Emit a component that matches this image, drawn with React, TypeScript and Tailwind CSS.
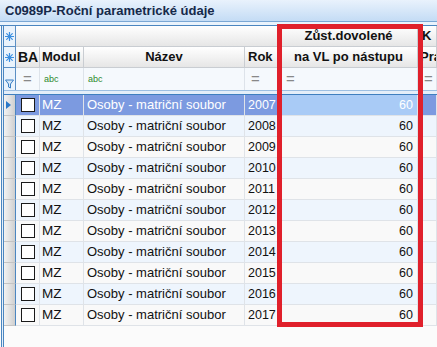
import React from "react";

const years = [2007, 2008, 2009, 2010, 2011, 2012, 2013, 2014, 2015, 2016, 2017];

const cols = "grid-cols-[12px_24px_44px_161px_35px_138px_1fr]";

function Star() {
  return (
    <svg width="9" height="9" viewBox="0 0 9 9" className="block">
      <g stroke="#3a8ee0" strokeWidth="1.2" strokeLinecap="round">
        <line x1="4.5" y1="0.5" x2="4.5" y2="8.5" />
        <line x1="0.5" y1="4.5" x2="8.5" y2="4.5" />
        <line x1="1.7" y1="1.7" x2="7.3" y2="7.3" />
        <line x1="7.3" y1="1.7" x2="1.7" y2="7.3" />
      </g>
    </svg>
  );
}

function Funnel() {
  return (
    <svg width="9" height="10" viewBox="0 0 9 10" className="block">
      <path d="M0.5 1 H8.5 L5.5 5 V9 L3.5 8 V5 Z" fill="#d6e8f8" stroke="#3a7fc4" strokeWidth="1" />
    </svg>
  );
}

const ind =
  "border-r border-[#5b8fc4] bg-gradient-to-r from-[#f4f4f4] to-[#d6d6d6] flex items-center justify-center";
const hdr =
  "border-r border-b border-[#c9cdd2] bg-gradient-to-b from-[#ffffff] to-[#e6e6e6] flex items-center overflow-hidden whitespace-nowrap font-bold text-[13px]";

export default function App() {
  return (
    <div className="w-[437px] h-[347px] overflow-hidden bg-[#fbfbfb] relative text-[#111] font-['Liberation_Sans',Arial,sans-serif]">
      <div className="h-[22px] bg-gradient-to-b from-[#e9f2fc] to-[#c4dcf5] border-b border-[#7aa7d4] flex items-center pl-[5px]">
        <span className="text-[13px] font-bold text-[#15294a]">C0989P-Roční parametrické údaje</span>
      </div>
      <div className="h-[4px] bg-[#eaf3fc] border-b border-[#4b86c0]" />
      <div className="flex h-[321px]">
        <div className="w-[1px] bg-[#4b86c0] ml-[1px]" />
        <div className="w-[1px] bg-[#e6f0fa]" />
        <div className="w-[1px] bg-[#4b86c0]" />
        <div className="flex-1 flex flex-col">
          {/* group header */}
          <div className={`grid ${cols} h-[21px]`}>
            <div className={`${ind} border-b border-b-[#5b8fc4] bg-none bg-[#eaf3fc]`}>
              <Star />
            </div>
            <div className={`${hdr} col-span-4`} />
            <div className={`${hdr} justify-center`}>Zůst.dovolené</div>
            <div className={`${hdr} pl-[4px]`}>K</div>
          </div>
          {/* header */}
          <div className={`grid ${cols} h-[21px]`}>
            <div className={`${ind} border-b border-b-[#5b8fc4] bg-none bg-[#eaf3fc]`}>
              <Star />
            </div>
            <div className={`${hdr} pl-[2px] text-[14px]`}>BA</div>
            <div className={`${hdr} pl-[2px]`}>Modul</div>
            <div className={`${hdr} justify-center`}>Název</div>
            <div className={`${hdr} pl-[3px]`}>Rok</div>
            <div className={`${hdr} justify-center`}>na VL po nástupu</div>
            <div className={`${hdr} pl-[2px]`}>Pra</div>
          </div>
          {/* filter */}
          <div className={`grid ${cols} h-[22px] bg-[#f5f9fd]`}>
            <div className={`${ind} bg-none bg-[#eaf3fc] items-end pb-[2px]`}>
              <Funnel />
            </div>
            {["=", "abc", "abc", "=", "=", "="].map((t, i) => (
              <div
                key={i}
                className={`border-r border-[#dde3ea] flex items-center ${
                  t === "abc" ? "pl-[4px] text-[9px] text-[#2d8a2d]" : "pl-[6px] text-[15px] text-[#888]"
                } ${i === 0 ? "pl-[7px]" : ""}`}
              >
                {t}
              </div>
            ))}
          </div>
          <div className="h-[5px] bg-[#e4eef9] border-t border-b border-t-[#9dbfe2] border-b-[#3f7fbf]" />
          {/* rows */}
          {years.map((y, idx) => {
            const sel = idx === 0;
            const bg = sel ? "bg-[#7c9ae0]" : idx % 2 === 1 ? "bg-[#eef5fd]" : "bg-[#f9f9f9]";
            const txt = sel ? "text-white" : "text-[#111]";
            const cell = `border-r border-b border-[#dfe3e8] flex items-center overflow-hidden whitespace-nowrap ${txt}`;
            return (
              <div key={y} className={`grid ${cols} h-[21px] ${bg}`}>
                <div className="border-r border-b border-r-[#4b86c0] border-b-[#c4c4c4] bg-gradient-to-r from-[#f2f2f2] via-[#e2e2e2] to-[#cfcfcf] flex items-center pl-[2px]">
                  {sel && (
                    <svg width="5" height="8" viewBox="0 0 5 8">
                      <path d="M0 0 L5 4 L0 8 Z" fill="#2a78c8" />
                    </svg>
                  )}
                </div>
                <div className={`${cell} pl-[5px]`}>
                  <div className="w-[14px] h-[14px] border border-[#1a1a1a] bg-white" />
                </div>
                <div className={`${cell} pl-[2px] text-[13.5px]`}>MZ</div>
                <div className={`${cell} pl-[3px] text-[13px]`}>Osoby - matriční soubor</div>
                <div className={`${cell} pl-[3px] text-[12.5px]`}>{y}</div>
                <div className={`${cell} justify-end pr-[4px] text-[12.5px] ${sel ? "bg-[#a9cbf6] text-[#111]" : ""}`}>60</div>
                <div className={cell} />
              </div>
            );
          })}
          <div className="flex-1 bg-[#fbfbfb]" />
        </div>
      </div>
      <div className="absolute left-[277px] top-[24px] w-[146px] h-[303px] border-[5px] border-[#e0202b] pointer-events-none" />
    </div>
  );
}
